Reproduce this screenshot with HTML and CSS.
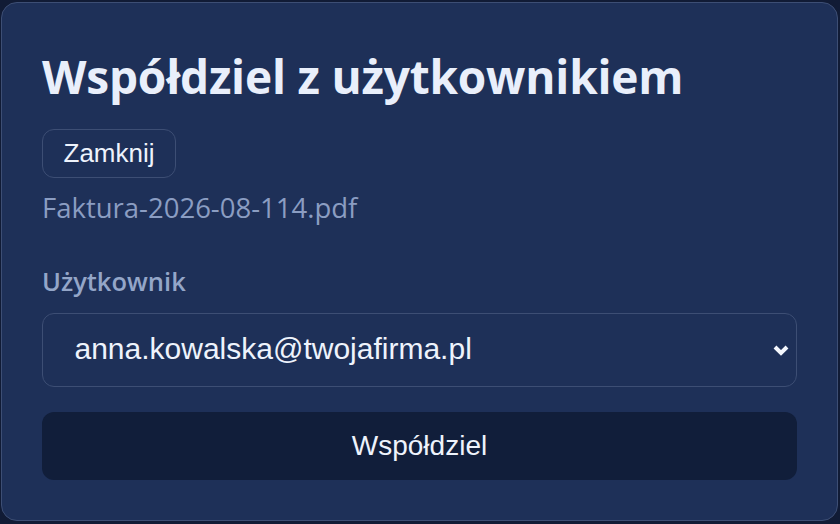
FILE: index.html
```html
<!DOCTYPE html>
<html lang="pl">
<head>
<meta charset="utf-8">
<link rel="stylesheet" href="styles.css">
</head>
<body>
<div class="dialog">
  <h1 class="title">Współdziel z użytkownikiem</h1>
  <button class="close-btn" type="button">Zamknij</button>
  <p class="filename">Faktura-2026-08-114.pdf</p>
  <div class="field-label" id="user-label">Użytkownik</div>
  <div class="select" role="combobox" aria-labelledby="user-label" aria-expanded="false" tabindex="0">
    <span class="select-value">anna.kowalska@twojafirma.pl</span>
    <svg class="chevron" viewBox="0 0 18 13" width="18" height="13" aria-hidden="true">
      <path d="M3 3 L9 9 L15 3" fill="none" stroke="#f4f7fd" stroke-width="4" stroke-linejoin="miter"/>
    </svg>
  </div>
  <button class="share-btn" type="button">Współdziel</button>
</div>
</body>
</html>
```

FILE: styles.css
```css
html, body {
  margin: 0;
  padding: 0;
  background: #111b35;
  height: 100%;
}
body {
  padding: 2px 2px 0 1px;
  box-sizing: border-box;
  font-family: "Open Sans", "Noto Sans", sans-serif;
}
.dialog {
  box-sizing: border-box;
  height: 519px;
  background: #1e3058;
  border: 1.5px solid #3d4e74;
  border-radius: 16px;
  padding: 42px 40px 0 40px;
  display: flex;
  flex-direction: column;
  align-items: flex-start;
}
.title {
  margin: 0;
  font-size: 46px;
  line-height: 62px;
  font-weight: 700;
  color: #e9effb;
  letter-spacing: -0.2px;
}
.close-btn {
  margin-top: 21.5px;
  height: 49px;
  padding: 0 20.5px;
  background: transparent;
  border: 1.5px solid #3d4e74;
  border-radius: 12px;
  color: #eef3fc;
  font-family: "Liberation Sans", Arial, sans-serif;
  font-size: 26px;
}
.filename {
  margin: 13px 0 0 0;
  font-size: 27.5px;
  line-height: 34px;
  color: #8b9dc2;
}
.field-label {
  margin-top: 40px;
  font-size: 25.5px;
  line-height: 32px;
  font-weight: 600;
  color: #94a6c8;
}
.select {
  margin-top: 16px;
  align-self: stretch;
  height: 74px;
  box-sizing: border-box;
  display: flex;
  align-items: center;
  justify-content: space-between;
  background: #1e3058;
  border: 1.5px solid #3d4e74;
  border-radius: 12px;
  color: #eef3fc;
  font-family: "Liberation Sans", Arial, sans-serif;
  font-size: 30px;
  padding: 0 6.5px 1px 31.5px;
  outline: none;
}
.chevron {
  flex: none;
  display: block;
  margin-top: 2px;
}
.share-btn {
  margin-top: 25px;
  align-self: stretch;
  height: 68px;
  background: #111e3a;
  border: none;
  border-radius: 12px;
  color: #eef3fc;
  font-family: "Liberation Sans", Arial, sans-serif;
  font-size: 28px;
}
```
